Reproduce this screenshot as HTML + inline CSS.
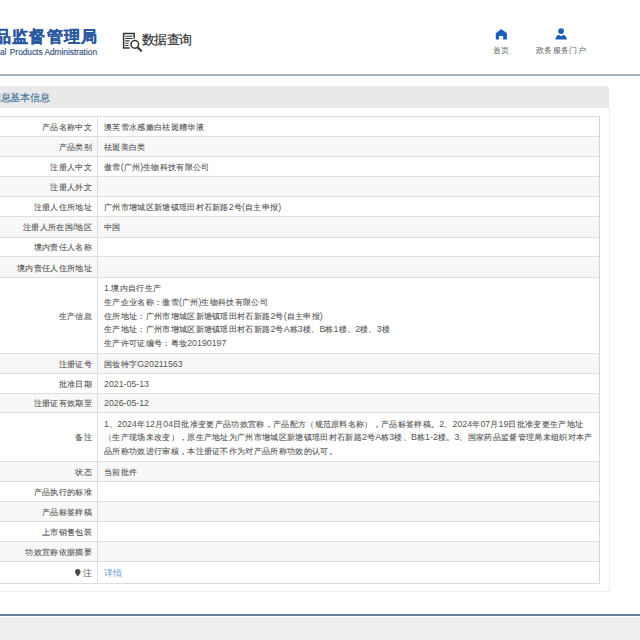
<!DOCTYPE html>
<html><head><meta charset="utf-8">
<style>
*{margin:0;padding:0;box-sizing:border-box}
html,body{width:640px;height:640px;overflow:hidden;background:#fff;font-family:"Liberation Sans",sans-serif;}
div,svg{position:absolute}
#hline{left:0;top:74px;width:640px;height:2px;background:#a0b2c0;}
#logo{left:-56.5px;top:27.5px;font-size:16px;font-weight:bold;color:#2a58a0;white-space:nowrap;letter-spacing:1.2px;line-height:18px;-webkit-text-stroke:0.3px #2a58a0}
#logoen{left:-55px;top:47.5px;font-size:8.3px;color:#34507e;white-space:nowrap;line-height:9px;-webkit-text-stroke:0.15px #34507e}
#sq{left:142px;top:33px;font-size:13px;color:#333;white-space:nowrap;line-height:14px;letter-spacing:-0.75px;-webkit-text-stroke:0.2px #333}
#sqi{left:122px;top:32px;}
.nav{top:46px;font-size:8.4px;color:#666;white-space:nowrap;line-height:9px;letter-spacing:0.32px}
#bar{left:-10px;top:85.5px;width:619px;height:22.5px;background:#e9e9e9;border-radius:0 4px 0 0;}
#bartxt{left:-9px;top:92.7px;font-size:9.5px;color:#3d6f95;white-space:nowrap;line-height:10px;letter-spacing:-0.27px;-webkit-text-stroke:0.15px #3d6f95}
#panelr{left:609px;top:108px;width:1px;height:483px;background:#eee}
#panelb{left:0;top:591px;width:610px;height:1px;background:#eee}
#tr{left:599px;top:116px;width:1px;height:467px;background:#d4d4d4}
#vd{left:97px;top:116px;width:1px;height:467px;background:#ddd}
.row{left:0;width:600px}
.hl{left:0;width:600px;height:1px;background:#dedede}
.lab{right:548px;font-size:8.8px;color:#555;white-space:nowrap;line-height:10px;transform:translateY(-50%);margin-top:0.5px}
.val{left:104px;font-size:8.8px;color:#555;white-space:nowrap;line-height:10px;transform:translateY(-50%);margin-top:0.5px}
.c{font-size:8.4px;letter-spacing:0.32px;-webkit-text-stroke:0.1px #555}
.lnk{color:#5b9bd5}
.pin{position:relative;display:inline-block;vertical-align:-1px;margin-right:2px}
#fline{left:0;top:614px;width:640px;height:2px;background:#62839e;}
#foot{left:0;top:617px;width:640px;height:23px;background:#eeeeee;}
</style></head><body>
<div id="hline"></div>
<div id="logo">国家药品监督管理局</div>
<div id="logoen">National Medical<span style="margin-left:1.2px"> Products Administration</span></div>
<svg style="left:118px;top:28px" width="28" height="28" viewBox="0 0 28 28" fill="none" stroke="#333"><path d="M11.6 20H5.6V5.6H16.2V10.5" stroke-width="1.5"/><path d="M7.2 8.3H14.5M7.2 10.5H14.5M7.2 12.9H11.6M7.2 15.3H10.5M7.2 17.5H10.5" stroke-width="1.1"/><circle cx="16.8" cy="16.4" r="3.8" stroke-width="1.5"/><path d="M19.6 19.4L23.2 22.8" stroke-width="2" stroke-linecap="round"/></svg>
<div id="sq">数据查询</div>
<svg style="left:490px;top:24px" width="24" height="20" viewBox="0 0 24 20"><path d="M5.8 9.3L11.25 4.9L16.9 9.3V15.6H13.1V12H9V15.6H5.8Z" fill="#1b5fb8"/></svg>
<svg style="left:550px;top:24px" width="24" height="20" viewBox="0 0 24 20"><circle cx="11.06" cy="7.1" r="2.9" fill="#1b5fb8"/><path d="M5.4 15.6C5.8 12.5 7 11 9 10.9L11.06 12.2L13.1 10.9C15 11 16.6 12.5 17.06 15.6Z" fill="#1b5fb8"/></svg>
<div class="nav" style="left:493px">首页</div>
<div class="nav" style="left:536px">政务服务门户</div>
<div id="bar"></div>
<div id="bartxt">信息基本信息</div>
<div id="panelr"></div>
<div id="panelb"></div>
<div class="row" style="top:116.2px;height:20.30px;background:#fff"></div>
<div class="lab" style="top:126.35px"><span class="c">产品名称中文</span></div>
<div class="val" id="v0_0" style="top:126.35px"><span class="c">澳芙雪水感嫩白祛斑精华液</span></div>
<div class="row" style="top:136.5px;height:20.20px;background:#f8f8f8"></div>
<div class="lab" style="top:146.60px"><span class="c">产品类别</span></div>
<div class="val" id="v1_0" style="top:146.60px"><span class="c">祛斑美白类</span></div>
<div class="row" style="top:156.7px;height:20.00px;background:#fff"></div>
<div class="lab" style="top:166.70px"><span class="c">注册人中文</span></div>
<div class="val" id="v2_0" style="top:166.70px"><span class="c">傲雪</span>(<span class="c">广州</span>)<span class="c">生物科技有限公司</span></div>
<div class="row" style="top:176.7px;height:20.00px;background:#f8f8f8"></div>
<div class="lab" style="top:186.70px"><span class="c">注册人外文</span></div>
<div class="row" style="top:196.7px;height:20.20px;background:#fff"></div>
<div class="lab" style="top:206.80px"><span class="c">注册人住所地址</span></div>
<div class="val" id="v4_0" style="top:206.80px"><span class="c">广州市增城区新塘镇瑶田村石新路</span>2<span class="c">号</span>(<span class="c">自主申报</span>)</div>
<div class="row" style="top:216.9px;height:20.10px;background:#f8f8f8"></div>
<div class="lab" style="top:226.95px"><span class="c">注册人所在国</span>/<span class="c">地区</span></div>
<div class="val" id="v5_0" style="top:226.95px"><span class="c">中国</span></div>
<div class="row" style="top:237.0px;height:19.90px;background:#fff"></div>
<div class="lab" style="top:246.95px"><span class="c">境内责任人名称</span></div>
<div class="row" style="top:256.9px;height:20.50px;background:#f8f8f8"></div>
<div class="lab" style="top:267.15px"><span class="c">境内责任人住所地址</span></div>
<div class="row" style="top:277.4px;height:75.60px;background:#fff"></div>
<div class="lab" style="top:315.20px"><span class="c">生产信息</span></div>
<div class="val" id="v8_0" style="top:287.80px">1.<span class="c">境内自行生产</span></div>
<div class="val" id="v8_1" style="top:301.50px"><span class="c">生产企业名称：傲雪</span>(<span class="c">广州</span>)<span class="c">生物科技有限公司</span></div>
<div class="val" id="v8_2" style="top:315.20px"><span class="c">住所地址：广州市增城区新塘镇瑶田村石新路</span>2<span class="c">号</span>(<span class="c">自主申报</span>)</div>
<div class="val" id="v8_3" style="top:328.90px"><span class="c">生产地址：广州市增城区新塘镇瑶田村石新路</span>2<span class="c">号</span>A<span class="c">栋</span>3<span class="c">楼、</span>B<span class="c">栋</span>1<span class="c">楼、</span>2<span class="c">楼、</span>3<span class="c">楼</span></div>
<div class="val" id="v8_4" style="top:342.60px"><span class="c">生产许可证编号：粤妆</span>20190197</div>
<div class="row" style="top:353.0px;height:20.00px;background:#f8f8f8"></div>
<div class="lab" style="top:363.00px"><span class="c">注册证号</span></div>
<div class="val" id="v9_0" style="top:363.00px"><span class="c">国妆特字</span>G20211563</div>
<div class="row" style="top:373.0px;height:20.00px;background:#fff"></div>
<div class="lab" style="top:383.00px"><span class="c">批准日期</span></div>
<div class="val" id="v10_0" style="top:383.00px">2021-05-13</div>
<div class="row" style="top:393.0px;height:19.70px;background:#f8f8f8"></div>
<div class="lab" style="top:402.85px"><span class="c">注册证有效期至</span></div>
<div class="val" id="v11_0" style="top:402.85px">2026-05-12</div>
<div class="row" style="top:412.7px;height:48.30px;background:#fff"></div>
<div class="lab" style="top:436.85px"><span class="c">备注</span></div>
<div class="val" id="v12_0" style="top:423.15px">1<span class="c">、</span>2024<span class="c">年</span>12<span class="c">月</span>04<span class="c">日批准变更产品功效宣称，产品配方（规范原料名称），产品标签样稿。</span>2<span class="c">、</span>2024<span class="c">年</span>07<span class="c">月</span>19<span class="c">日批准变更生产地址</span></div>
<div class="val" id="v12_1" style="top:436.85px"><span class="c">（生产现场未改变），原生产地址为广州市增城区新塘镇瑶田村石新路</span>2<span class="c">号</span>A<span class="c">栋</span>3<span class="c">楼、</span>B<span class="c">栋</span>1-2<span class="c">楼。</span>3<span class="c">、国家药品监督管理局未组织对本产</span></div>
<div class="val" id="v12_2" style="top:450.55px"><span class="c">品所称功效进行审核，本注册证不作为对产品所称功效的认可。</span></div>
<div class="row" style="top:461.0px;height:20.00px;background:#f8f8f8"></div>
<div class="lab" style="top:471.00px"><span class="c">状态</span></div>
<div class="val" id="v13_0" style="top:471.00px"><span class="c">当前批件</span></div>
<div class="row" style="top:481.0px;height:20.00px;background:#fff"></div>
<div class="lab" style="top:491.00px"><span class="c">产品执行的标准</span></div>
<div class="row" style="top:501.0px;height:20.00px;background:#f8f8f8"></div>
<div class="lab" style="top:511.00px"><span class="c">产品标签样稿</span></div>
<div class="row" style="top:521.0px;height:20.00px;background:#fff"></div>
<div class="lab" style="top:531.00px"><span class="c">上市销售包装</span></div>
<div class="row" style="top:541.0px;height:20.50px;background:#f8f8f8"></div>
<div class="lab" style="top:551.25px"><span class="c">功效宣称依据摘要</span></div>
<div class="row" style="top:561.5px;height:21.50px;background:#fff"></div>
<div class="lab" style="top:572.25px"><svg class="pin" width="5.6" height="7.5" viewBox="0 0 6 8"><path d="M3 0C1.3 0 0 1.3 0 3C0 5 3 8 3 8C3 8 6 5 6 3C6 1.3 4.7 0 3 0Z" fill="#4a4a4a"/></svg>注</div>
<div class="val lnk" style="top:572.25px">详情</div>
<div class="hl" style="top:115.7px"></div>
<div class="hl" style="top:136.0px"></div>
<div class="hl" style="top:156.2px"></div>
<div class="hl" style="top:176.2px"></div>
<div class="hl" style="top:196.2px"></div>
<div class="hl" style="top:216.4px"></div>
<div class="hl" style="top:236.5px"></div>
<div class="hl" style="top:256.4px"></div>
<div class="hl" style="top:276.9px"></div>
<div class="hl" style="top:352.5px"></div>
<div class="hl" style="top:372.5px"></div>
<div class="hl" style="top:392.5px"></div>
<div class="hl" style="top:412.2px"></div>
<div class="hl" style="top:460.5px"></div>
<div class="hl" style="top:480.5px"></div>
<div class="hl" style="top:500.5px"></div>
<div class="hl" style="top:520.5px"></div>
<div class="hl" style="top:540.5px"></div>
<div class="hl" style="top:561.0px"></div>
<div class="hl" style="top:582.5px"></div>
<div id="vd"></div>
<div id="tr"></div>
<div id="fline"></div>
<div id="foot"></div>
</body></html>
